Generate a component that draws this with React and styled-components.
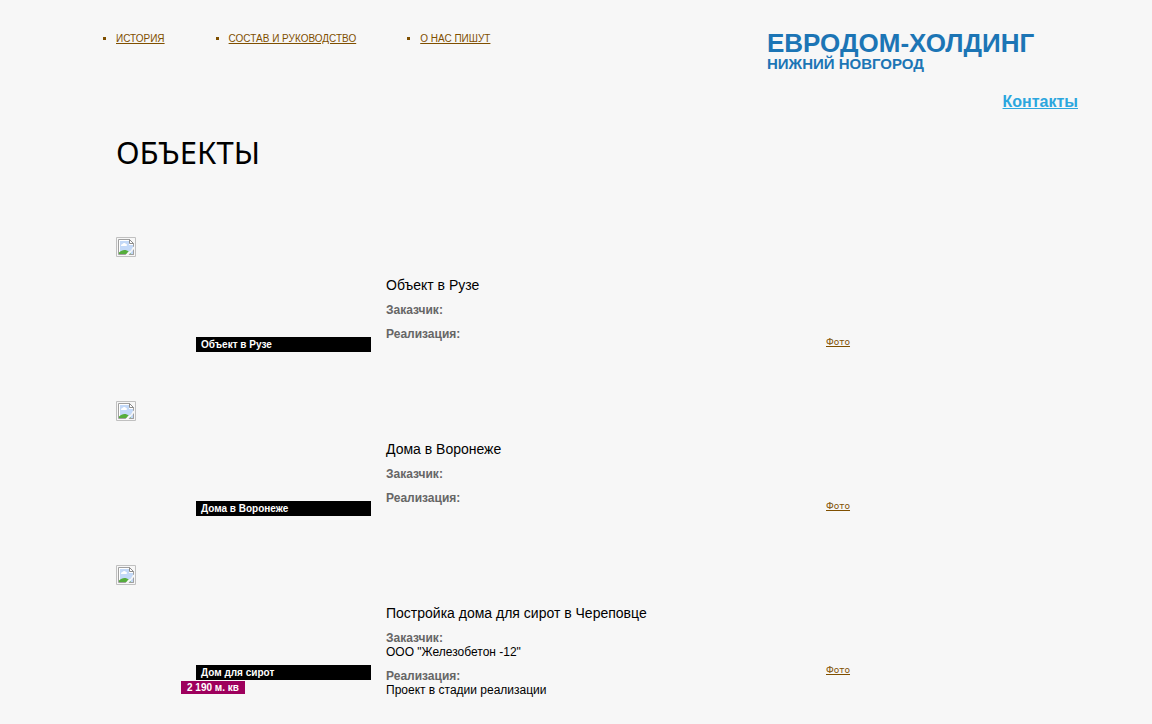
import React from 'react';
import styled, { createGlobalStyle } from 'styled-components';

const GlobalStyle = createGlobalStyle`
  * { box-sizing: border-box; }
  body {
    margin: 0;
    background: #f7f7f7;
    color: #000;
    font-family: Arial, "Liberation Sans", sans-serif;
    font-size: 12px;
    line-height: 14px;
    overflow-x: hidden;
  }
`;

const Page = styled.div`
  padding: 0 74px 0 116px;
`;

const Header = styled.header`
  display: flex;
  justify-content: space-between;
  align-items: flex-start;
  padding-top: 30px;
`;

const Menu = styled.ul`
  display: flex;
  gap: 64px;
  margin: 0;
  padding: 2px 0 0;
  list-style: square;
`;

const MenuItem = styled.li`
  color: #7f4f00;
  font-size: 10px;
  line-height: 14px;
`;

const MenuLink = styled.a`
  color: #7f4f00;
  text-transform: uppercase;
  white-space: nowrap;
`;

const Brand = styled.div`
  width: 311px;
  color: #1c75b5;
  font-weight: bold;
`;

const BrandName = styled.div`
  font-size: 26px;
  line-height: 26px;
`;

const BrandCity = styled.div`
  font-size: 15px;
  line-height: 16px;
`;

const ContactsLink = styled.a`
  display: block;
  margin-top: 20px;
  color: #2ba6de;
  font-size: 16px;
  line-height: 20px;
  text-align: right;
`;

const Title = styled.h1`
  margin: 20px 0 65px;
  font-family: "Noto Sans", sans-serif;
  font-size: 31px;
  font-weight: normal;
  line-height: 40px;
`;

const Card = styled.article`
  display: grid;
  grid-template-columns: 255px minmax(200px, 425px) auto;
  column-gap: 15px;
  min-height: 164px;
`;

const Preview = styled.div`
  display: flex;
  flex-direction: column;
  align-items: flex-start;
`;

const Thumb = styled.svg`
  display: block;
  margin-bottom: 80px;
`;

const Caption = styled.div`
  align-self: stretch;
  margin-left: 80px;
  padding: 0 5px;
  background: #000;
  color: #fff;
  font-size: 10px;
  font-weight: bold;
  line-height: 15px;
`;

const Area = styled.div`
  margin: 1px 0 0 65px;
  padding: 0 6px;
  background: #9e005d;
  color: #fff;
  font-size: 10px;
  font-weight: bold;
  line-height: 13px;
`;

const Details = styled.div`
  padding-top: 40px;
`;

const Name = styled.h2`
  margin: 0 0 10px;
  font-size: 14px;
  font-weight: normal;
  line-height: 16px;
`;

const Field = styled.p`
  margin: 0 0 10px;
`;

const Label = styled.strong`
  display: block;
  color: #666;
`;

const PhotoLink = styled.a`
  justify-self: start;
  align-self: start;
  margin-top: 98px;
  color: #7f4f00;
  font-family: Verdana, "DejaVu Sans", sans-serif;
  font-size: 9px;
  line-height: 14px;
`;

const MissingImage = () => (
  <Thumb width="20" height="20" viewBox="0 0 20 20" aria-hidden="true">
    <path d="M.5 .5h19v19H.5z" fill="none" stroke="#c0c0c0" />
    <path d="M2.5 2.5h11l4 4v11h-15z" fill="#fff" stroke="#a0a0a0" />
    <path d="M4 4h9v4h4v9H4z" fill="#c3d9f8" />
    <path d="M5 8.500a1.500 1.500 0 0 1 1.500-1.500a2 2 0 0 1 3.500 0a1 1 0 0 1 0 2H5z" fill="#fff" />
    <path d="M3 17v-1.500c3-3 7-3.500 10-.5l2 2z" fill="#55ad3c" />
    <path d="M13.500 2.500v4h4z" fill="#fff" stroke="#8c8c8c" />
    <path d="M18.500 9v2.500l-6 6.500H9.500l2.500-3 3-1.500 1.500-3z" fill="#f7f7f7" />
    <path d="M17.500 13v4.500h-4" fill="none" stroke="#a0a0a0" />
  </Thumb>
);

const objects = [
  { name: 'Объект в Рузе', caption: 'Объект в Рузе' },
  { name: 'Дома в Воронеже', caption: 'Дома в Воронеже' },
  {
    name: 'Постройка дома для сирот в Череповце',
    caption: 'Дом для сирот',
    area: '2 190 м. кв',
    customer: 'ООО "Железобетон -12"',
    status: 'Проект в стадии реализации',
  },
];

export default function App() {
  return (
    <>
      <GlobalStyle />
      <Page>
        <Header>
          <nav>
            <Menu>
              {['История', 'Состав и руководство', 'О нас пишут'].map((item) => (
                <MenuItem key={item}>
                  <MenuLink href="#">{item}</MenuLink>
                </MenuItem>
              ))}
            </Menu>
          </nav>
          <Brand>
            <BrandName>ЕВРОДОМ-ХОЛДИНГ</BrandName>
            <BrandCity>НИЖНИЙ НОВГОРОД</BrandCity>
            <ContactsLink href="#">Контакты</ContactsLink>
          </Brand>
        </Header>
        <main>
          <Title>ОБЪЕКТЫ</Title>
          {objects.map((object) => (
            <Card key={object.name}>
              <Preview>
                <MissingImage />
                <Caption>{object.caption}</Caption>
                {object.area && <Area>{object.area}</Area>}
              </Preview>
              <Details>
                <Name>{object.name}</Name>
                <Field>
                  <Label>Заказчик:</Label>
                  {object.customer}
                </Field>
                <Field>
                  <Label>Реализация:</Label>
                  {object.status}
                </Field>
              </Details>
              <PhotoLink href="#">Фото</PhotoLink>
            </Card>
          ))}
        </main>
      </Page>
    </>
  );
}
